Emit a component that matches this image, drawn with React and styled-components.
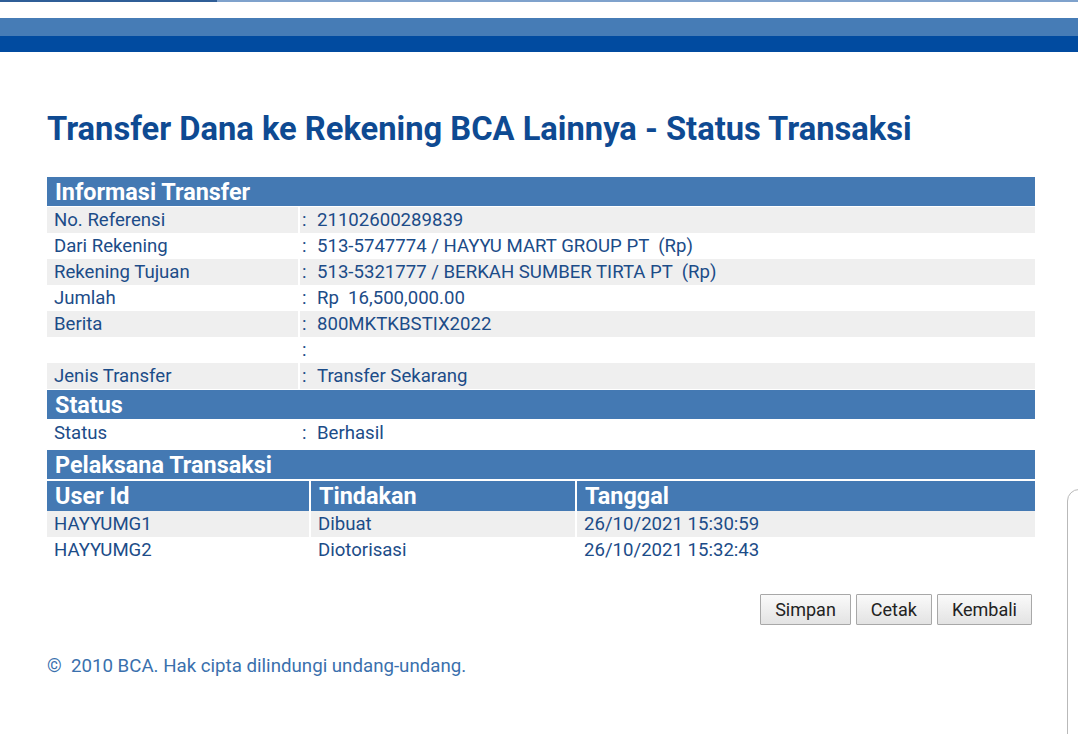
import styled, { createGlobalStyle } from 'styled-components';

const GlobalStyle = createGlobalStyle`
    html, body {
        margin: 0;
        padding: 0;
        background: #fff;
        font-family: Roboto, "Liberation Sans", Arial, sans-serif;
        overflow: hidden;
    }
`;

const Page = styled.div`
    position: relative;
    width: 1078px;
    height: 734px;
    overflow: hidden;
`;

const TopLine = styled.div`
    display: flex;
    height: 2px;
`;

const TopLineSegment = styled.div`
    flex: ${p => p.$grow ? 1 : '0 0 217px'};
    background: ${p => p.$dark ? '#2f5e97' : '#7fa2cc'};
`;

const Banner = styled.div`
    margin-top: 16px;
    display: flex;
    flex-direction: column;
`;

const BannerBand = styled.div`
    height: ${p => p.$h}px;
    background: ${p => p.$color};
`;

const Content = styled.div`
    padding: 0 43px 0 47px;
`;

const Title = styled.h1`
    margin: 60px 0 31px;
    font-size: 32.7px;
    line-height: 34px;
    font-weight: 700;
    color: #0e4a92;
    white-space: nowrap;
`;

const Section = styled.div`
    display: flex;
    flex-direction: column;
    margin-bottom: ${p => p.$gap || 0}px;
`;

const SectionHeader = styled.div`
    height: 29px;
    line-height: 30px;
    background: #4479b3;
    color: #fff;
    font-size: 23.4px;
    font-weight: 700;
    padding-left: 8px;
    border-bottom: 1px solid #fff;
`;

const Row = styled.div`
    display: grid;
    grid-template-columns: 253px 1fr;
    height: 26px;
    background: ${p => p.$shaded ? '#efefef' : '#fff'};
`;

const Label = styled.div`
    padding-left: 7px;
    font-size: 18.6px;
    line-height: 26px;
    color: #1c4c88;
    border-right: 2px solid #fff;
`;

const Value = styled.div`
    display: flex;
    font-size: 18.6px;
    line-height: 26px;
    color: #1c4c88;
    white-space: pre;
`;

const Colon = styled.span`
    width: 15px;
    padding-left: 2px;
`;

const Grid = styled.div`
    display: grid;
    grid-template-columns: 262px 264px 1fr;
    column-gap: 2px;
    height: ${p => p.$head ? 29 : 26}px;
    background: #fff;
    border-top: ${p => p.$head ? '1px solid #fff' : 'none'};
    border-bottom: ${p => p.$head ? '1px solid #fff' : 'none'};
`;

const HeadCell = styled.div`
    background: #4479b3;
    color: #fff;
    font-size: 23.4px;
    font-weight: 700;
    line-height: 30px;
    padding-left: 8px;
`;

const Cell = styled.div`
    font-size: 18.6px;
    line-height: 26px;
    color: #1c4c88;
    padding-left: 7px;
    background: ${p => p.$shaded ? '#efefef' : '#fff'};
`;

const Actions = styled.div`
    display: flex;
    justify-content: flex-end;
    gap: 5px;
    margin-top: 31px;
    padding-right: 3px;
`;

const Button = styled.button`
    height: 31px;
    padding: 0 14px;
    font-family: Roboto, "Liberation Sans", Arial, sans-serif;
    font-size: 18px;
    color: #222;
    background: linear-gradient(#fafafa, #e3e3e3);
    border: 1px solid #a8a8a8;
    border-radius: 1px;
`;

const Footer = styled.div`
    margin-top: 30px;
    font-size: 18.7px;
    color: #3a70ad;
    white-space: pre;
`;

const SideWidget = styled.div`
    position: absolute;
    left: 1067px;
    top: 489px;
    width: 60px;
    height: 300px;
    border: 1.5px solid #b9b9b9;
    border-radius: 12px;
    background: #fff;
`;

const info = [
    ['No. Referensi', '21102600289839'],
    ['Dari Rekening', '513-5747774 / HAYYU MART GROUP PT  (Rp)'],
    ['Rekening Tujuan', '513-5321777 / BERKAH SUMBER TIRTA PT  (Rp)'],
    ['Jumlah', 'Rp  16,500,000.00'],
    ['Berita', '800MKTKBSTIX2022'],
    ['', ''],
    ['Jenis Transfer', 'Transfer Sekarang'],
];

const executors = [
    ['HAYYUMG1', 'Dibuat', '26/10/2021 15:30:59'],
    ['HAYYUMG2', 'Diotorisasi', '26/10/2021 15:32:43'],
];

const App = () => (
    <Page>
        <GlobalStyle />
        <TopLine>
            <TopLineSegment $dark />
            <TopLineSegment $grow />
        </TopLine>
        <Banner>
            <BannerBand $h={18} $color="#467cb6" />
            <BannerBand $h={16} $color="#014ba0" />
        </Banner>
        <Content>
            <Title>Transfer Dana ke Rekening BCA Lainnya - Status Transaksi</Title>

            <Section $gap={1}>
                <SectionHeader>Informasi Transfer</SectionHeader>
                {info.map(([label, value], i) => (
                    <Row key={i} $shaded={i % 2 === 0}>
                        <Label>{label}</Label>
                        <Value><Colon>:</Colon>{value}</Value>
                    </Row>
                ))}
            </Section>

            <Section $gap={4}>
                <SectionHeader>Status</SectionHeader>
                <Row>
                    <Label>Status</Label>
                    <Value><Colon>:</Colon>Berhasil</Value>
                </Row>
            </Section>

            <Section>
                <SectionHeader>Pelaksana Transaksi</SectionHeader>
                <Grid $head>
                    <HeadCell>User Id</HeadCell>
                    <HeadCell>Tindakan</HeadCell>
                    <HeadCell>Tanggal</HeadCell>
                </Grid>
                {executors.map((r, i) => (
                    <Grid key={i}>
                        {r.map((c, j) => <Cell key={j} $shaded={i % 2 === 0}>{c}</Cell>)}
                    </Grid>
                ))}
            </Section>

            <Actions>
                <Button>Simpan</Button>
                <Button>Cetak</Button>
                <Button>Kembali</Button>
            </Actions>

            <Footer>©  2010 BCA. Hak cipta dilindungi undang-undang.</Footer>
        </Content>
        <SideWidget />
    </Page>
);

export default App;
